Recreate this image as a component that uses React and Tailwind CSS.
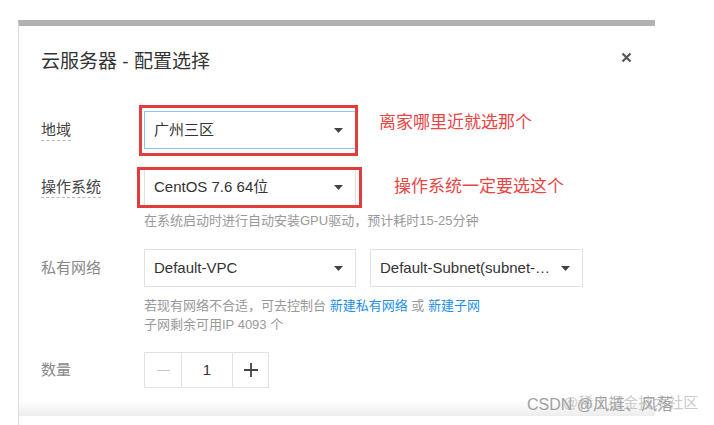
import React from 'react';

const font = { fontFamily: '"Liberation Sans", "Noto Sans CJK SC", sans-serif' };

const Caret = () => (
  <svg width="9" height="5" viewBox="0 0 9 5" className="shrink-0">
    <path d="M0 0h9L4.5 5z" fill="#444" />
  </svg>
);

const Select = ({ value, focused, className = '' }) => (
  <div
    className={`h-[38px] w-[212px] flex items-center justify-between pl-[9px] pr-[12px] bg-white border text-[15px] text-[#333] ${focused ? 'border-[#8cc6ef]' : 'border-[#e2e2e2]'} ${className}`}
  >
    <span className="truncate">{value}</span>
    <Caret />
  </div>
);

const Label = ({ children, strong }) => (
  <div className="w-[103px] shrink-0 flex items-center">
    <span
      className={`text-[15px] leading-[20px] ${strong ? 'text-[#444] border-b border-dashed border-[#b5b5b5]' : 'text-[#888]'}`}
    >
      {children}
    </span>
  </div>
);

export default function App() {
  return (
    <div className="w-[714px] h-[425px] bg-white overflow-hidden pt-[20px]" style={font}>
      <div className="ml-[18px] w-[637px] h-[405px] border-t-[6px] border-[#b1b1b1] border-l border-l-[#dedede] flex flex-col relative">
        {/* Header */}
        <div className="flex items-center justify-between pl-[22px] pr-[23px] pt-[24px]">
          <h2 className="text-[19px] leading-[24px] text-[#333]">云服务器 - 配置选择</h2>
          <svg width="11" height="11" viewBox="0 0 11 11" className="mb-[9px]">
            <path d="M1.5 1.5l8 8M9.5 1.5l-8 8" stroke="#555" strokeWidth="2.2" />
          </svg>
        </div>

        <div className="pl-[22px] flex flex-col">
          {/* 地域 */}
          <div className="flex items-center mt-[37px]">
            <Label strong>地域</Label>
            <div className="relative">
              <Select value="广州三区" focused />
              <div className="absolute -left-[5px] -top-[6px] -right-[2px] -bottom-[7px] border-[3px] border-[#e23c3c]" />
            </div>
            <span className="ml-[23px] -mt-[14px] text-[17px] text-[#e84545]">离家哪里近就选那个</span>
          </div>

          {/* 操作系统 */}
          <div className="flex items-center mt-[19px]">
            <Label strong>操作系统</Label>
            <div className="relative">
              <Select value="CentOS 7.6 64位" />
              <div className="absolute -left-[7px] -top-[1px] -right-[6px] -bottom-[2px] border-[3px] border-[#e23c3c]" />
            </div>
            <span className="ml-[38px] text-[17px] text-[#e84545]">操作系统一定要选这个</span>
          </div>
          <p className="ml-[103px] mt-[6px] text-[13px] leading-[18px] text-[#999]">
            在系统启动时进行自动安装GPU驱动，预计耗时15-25分钟
          </p>

          {/* 私有网络 */}
          <div className="flex items-center mt-[19px]">
            <Label>私有网络</Label>
            <Select value="Default-VPC" />
            <Select value="Default-Subnet(subnet-…" className="ml-[14px] w-[213px]" />
          </div>
          <div className="ml-[103px] mt-[9px] text-[13px] leading-[19px] text-[#999]">
            <p>
              若现有网络不合适，可去控制台 <span className="text-[#1f8fe6]">新建私有网络</span> 或{' '}
              <span className="text-[#1f8fe6]">新建子网</span>
            </p>
            <p>子网剩余可用IP 4093 个</p>
          </div>

          {/* 数量 */}
          <div className="flex items-center mt-[18px]">
            <Label>数量</Label>
            <div className="flex h-[36px] border border-[#e2e2e2] text-[#333]">
              <div className="w-[37px] flex items-center justify-center border-r border-[#e2e2e2]">
                <span className="block w-[13px] h-px bg-[#c8c8c8]" />
              </div>
              <div className="w-[51px] flex items-center justify-center border-r border-[#e2e2e2] text-[15px]">1</div>
              <div className="w-[35px] flex items-center justify-center">
                <svg width="14" height="14" viewBox="0 0 14 14">
                  <path d="M7 0v14M0 7h14" stroke="#444" strokeWidth="1.8" />
                </svg>
              </div>
            </div>
          </div>
        </div>

        {/* Footer shadow */}
        <div className="mt-auto mb-[9px] h-[16px] bg-gradient-to-b from-white to-[#ededed]" />
      </div>

      {/* Watermark */}
      <div className="absolute left-[527px] top-[394px] text-[16px] leading-[22px] text-[#8a8a8a] opacity-80 whitespace-nowrap">
        CSDN @风涟、风落
      </div>
      <div className="absolute left-[563px] top-[392px] text-[15px] leading-[22px] text-[#aaa] opacity-60 whitespace-nowrap">
        @稀土掘金技术社区
      </div>
    </div>
  );
}
